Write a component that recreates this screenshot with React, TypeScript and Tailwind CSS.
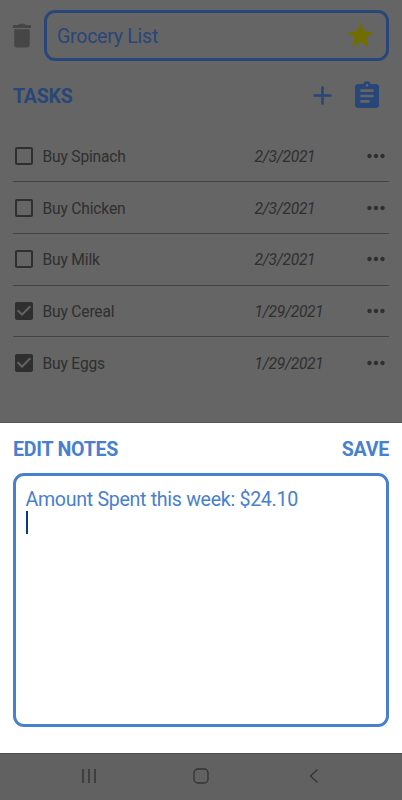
import React from "react";

type Task = { name: string; date: string; done: boolean; row: string };

const tasks: Task[] = [
  { name: "Buy Spinach", date: "2/3/2021", done: false, row: "h-[52px] border-b" },
  { name: "Buy Chicken", date: "2/3/2021", done: false, row: "h-[52px] border-b" },
  { name: "Buy Milk", date: "2/3/2021", done: false, row: "h-[52px] border-b pb-px" },
  { name: "Buy Cereal", date: "1/29/2021", done: true, row: "h-[51px] border-b" },
  { name: "Buy Eggs", date: "1/29/2021", done: true, row: "h-[52px]" },
];

function Icon({ d, className }: { d: string; className: string }) {
  return (
    <svg viewBox="0 0 24 24" fill="currentColor" className={className}>
      <path d={d} />
    </svg>
  );
}

const TRASH =
  "M6.2 6.900h11.6v11.700c0 1.100-.9 2-2 2H8.200c-1.100 0-2-.9-2-2zM5.200 3.800h4.100c.3-.7 1.200-.9 2.700-.9s2.400.2 2.700.9h4.100v2.200H5.200z";
const STAR = "M12 17.27L18.18 21l-1.64-7.03L22 9.24l-7.19-.61L12 2 9.19 8.63 2 9.24l5.46 4.73L5.82 21z";
const PLUS = "M19 13h-6v6h-2v-6H5v-2h6V5h2v6h6v2z";
const CLIPBOARD =
  "M19 3h-4.18C14.4 1.84 13.3 1 12 1c-1.3 0-2.4.84-2.82 2H5c-1.1 0-2 .9-2 2v14c0 1.1.9 2 2 2h14c1.1 0 2-.9 2-2V5c0-1.1-.9-2-2-2zm-7 0c.55 0 1 .45 1 1s-.45 1-1 1-1-.45-1-1 .45-1 1-1zm2 14H7v-2h7v2zm3-4H7v-2h10v2zm0-4H7V7h10v2z";
const BOX = "M19 5v14H5V5h14m0-2H5c-1.1 0-2 .9-2 2v14c0 1.1.9 2 2 2h14c1.1 0 2-.9 2-2V5c0-1.1-.9-2-2-2z";
const BOX_CHECKED =
  "M19 3H5c-1.11 0-2 .9-2 2v14c0 1.1.89 2 2 2h14c1.11 0 2-.9 2-2V5c0-1.1-.89-2-2-2zm-9 14l-5-5 1.41-1.41L10 14.17l7.59-7.59L19 8l-9 9z";
const DOTS =
  "M6 10c-1.1 0-2 .9-2 2s.9 2 2 2 2-.9 2-2-.9-2-2-2zm12 0c-1.1 0-2 .9-2 2s.9 2 2 2 2-.9 2-2-.9-2-2-2zm-6 0c-1.1 0-2 .9-2 2s.9 2 2 2 2-.9 2-2-.9-2-2-2z";

export default function App() {
  return (
    <div className="flex h-[800px] w-[402px] flex-col overflow-hidden bg-[#656565] font-['Roboto',sans-serif]">
      <div className="flex h-[423px] flex-col border-b border-[#555555] px-[13px] pt-[10px]">
        <header className="flex h-[51px] items-center">
          <Icon d={TRASH} className="-ml-[7px] h-[32px] w-[32px] text-[#464646]" />
          <div className="ml-[6px] flex h-[51px] flex-1 items-center justify-between rounded-[11px] border-3 border-[#294679] px-[10px]">
            <span className="pt-[2px] text-[19.6px] tracking-[-0.28px] leading-6 text-[#294679]">Grocery List</span>
            <Icon d={STAR} className="h-[31px] w-[31px] text-[#716e00]" />
          </div>
        </header>

        <div className="flex h-[69px] items-center justify-between">
          <h1 className="pt-[3px] text-[19.6px] tracking-[-0.25px] font-bold leading-6 text-[#294679]">TASKS</h1>
          <div className="flex items-center gap-[13px] pr-[6px] text-[#294679]">
            <Icon d={PLUS} className="h-[31px] w-[31px]" />
            <Icon d={CLIPBOARD} className="h-[32px] w-[32px]" />
          </div>
        </div>

        <ul>
          {tasks.map((t) => (
            <li key={t.name} className={"flex items-center border-[#444444] text-[15.6px] tracking-[-0.18px] leading-5 text-[#2f2f2f] " + t.row}>
              <Icon d={t.done ? BOX_CHECKED : BOX} className="-ml-px h-[24px] w-[24px] shrink-0" />
              <span className="ml-[6.5px] w-[212px] pt-[2px]">{t.name}</span>
              <span className="flex-1 pt-[2px] italic tracking-[-0.34px]">{t.date}</span>
              <Icon d={DOTS} className="h-[26px] w-[26px]" />
            </li>
          ))}
        </ul>
      </div>

      <section className="flex h-[330px] flex-col bg-white px-[13px] text-[#487fcf]">
        <div className="flex h-[50px] items-center justify-between pt-[4px] text-[19.6px] tracking-[-0.25px] font-bold leading-6">
          <h2>EDIT NOTES</h2>
          <button>SAVE</button>
        </div>
        <div className="h-[254px] rounded-[11px] border-3 border-[#487fcf] pl-[9.5px] pt-[12px] text-[19.6px] tracking-[-0.3px] leading-6">
          <p>Amount Spent this week: $24.10</p>
          <div className="-mt-px h-[23px] w-[2px] bg-[#0d3781]" />
        </div>
      </section>

      <nav className="flex h-[47px] justify-between border-t border-[#4d4d4d] bg-[#616161] px-[80px] pt-[13px] text-[#333333]">
        <svg viewBox="0 0 18 18" className="h-[18px] w-[18px]" stroke="currentColor" strokeWidth="1.5">
          <path d="M3 2v14M9 2v14M15 2v14" />
        </svg>
        <svg viewBox="0 0 18 18" className="h-[18px] w-[18px]" stroke="currentColor" strokeWidth="1.3" fill="none">
          <rect x="2" y="2" width="14" height="14" rx="4" />
        </svg>
        <svg viewBox="0 0 18 18" className="h-[18px] w-[18px]" stroke="currentColor" strokeWidth="1.3" fill="none">
          <path d="M13.5 2.5L6.5 9l7 6.5" />
        </svg>
      </nav>
    </div>
  );
}
